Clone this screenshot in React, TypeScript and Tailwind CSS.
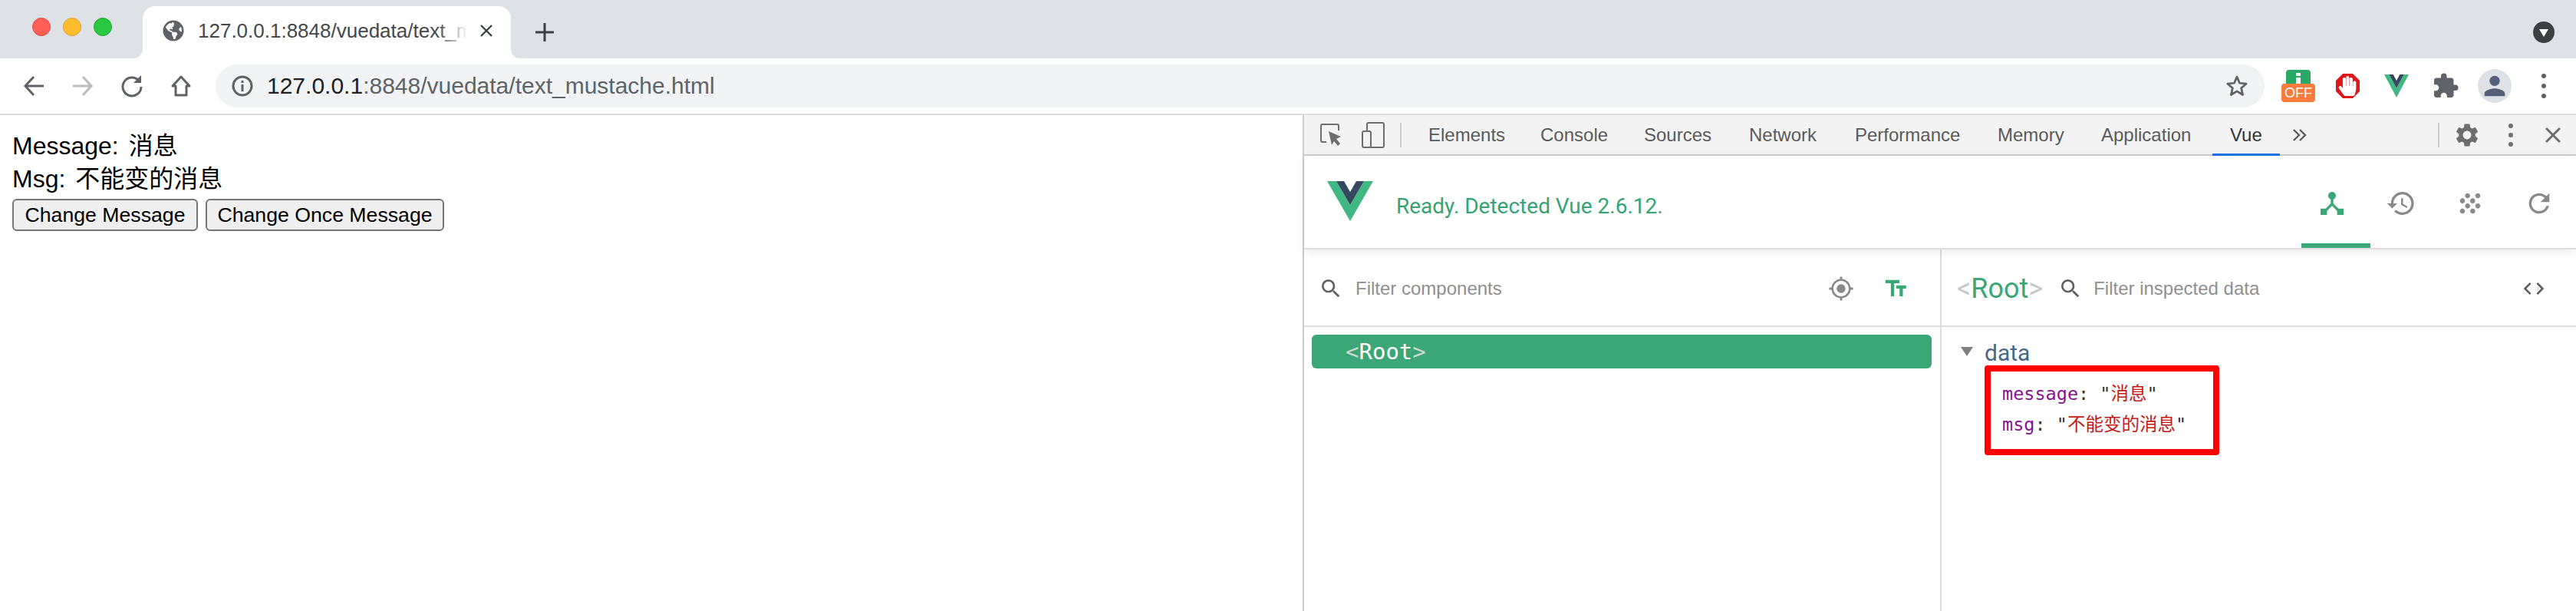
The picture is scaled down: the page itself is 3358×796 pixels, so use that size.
// Browser window with Vue devtools docked on the right.
import { FaGlobeAmericas, FaHandPaper } from "react-icons/fa";
import {
  MdCode,
  MdDeviceHub,
  MdExtension,
  MdFormatSize,
  MdGpsFixed,
  MdGrain,
  MdPerson,
  MdRefresh,
  MdRestore,
  MdSearch,
  MdSettings,
} from "react-icons/md";

const SANS = "font-['Liberation_Sans','Noto_Sans_CJK_SC',sans-serif]";
const MONO = "font-['DejaVu_Sans_Mono','Noto_Sans_CJK_SC',monospace]";
const ROBOTO = "font-['Roboto',sans-serif]";

// Widths keep each label at its place in the reference, Helvetica ran a bit wider here and there.
const devtoolsTabs = [
  { label: "Elements", width: "w-[146px]" },
  { label: "Console", width: "w-[135px]" },
  { label: "Sources", width: "w-[137px]" },
  { label: "Network", width: "w-[138px]" },
  { label: "Performance", width: "w-[186px]" },
  { label: "Memory", width: "w-[135px]" },
  { label: "Application", width: "w-[145px]" },
];

function VueLogo({ width, height }: { width: number; height: number }) {
  return (
    <svg width={width} height={height} viewBox="0 0 60 52" preserveAspectRatio="none">
      <polygon points="0,0 12,0 30,31 48,0 60,0 30,52" fill="#41b883" />
      <polygon points="12,0 22,0 30,14 38,0 48,0 30,31" fill="#35495e" />
    </svg>
  );
}

function Dots({ size = 6, gap = 7, color = "#5f6368" }: { size?: number; gap?: number; color?: string }) {
  const h = size * 3 + gap * 2;
  return (
    <svg width={size} height={h} viewBox={`0 0 ${size} ${h}`} fill={color}>
      <circle cx={size / 2} cy={size / 2} r={size / 2} />
      <circle cx={size / 2} cy={h / 2} r={size / 2} />
      <circle cx={size / 2} cy={h - size / 2} r={size / 2} />
    </svg>
  );
}

function NavButton({ children }: { children: React.ReactNode }) {
  return <div className="w-16 h-full flex items-center justify-center shrink-0">{children}</div>;
}

function TabStrip() {
  return (
    <div className="h-[76px] bg-[#dee1e6] flex items-start">
      <div className="w-[186px] shrink-0 flex gap-4 pl-[42px] pt-[23px]">
        <div className="w-6 h-6 rounded-full bg-[#ff5f57] border border-[#e2463f]" />
        <div className="w-6 h-6 rounded-full bg-[#febc2e] border border-[#dea123]" />
        <div className="w-6 h-6 rounded-full bg-[#28c840] border border-[#1aab29]" />
      </div>
      <div className="relative mt-2 w-[480px] h-[68px] bg-white rounded-t-2xl flex items-center pb-1 shrink-0">
        <div className="absolute -left-3 bottom-0 w-3 h-3 bg-white">
          <div className="w-full h-full bg-[#dee1e6] rounded-br-xl" />
        </div>
        <div className="absolute -right-3 bottom-0 w-3 h-3 bg-white">
          <div className="w-full h-full bg-[#dee1e6] rounded-bl-xl" />
        </div>
        <FaGlobeAmericas className="ml-[26px] shrink-0 text-[#5f6368]" size={28} />
        <div className={`${SANS} relative ml-[18px] w-[352px] overflow-hidden whitespace-nowrap text-[26px] leading-8 text-[#45474a]`}>
          127.0.0.1:8848/vuedata/text_mustache.html
          <div className="absolute right-0 top-0 h-full w-10 bg-gradient-to-r from-transparent to-white" />
        </div>
        <svg className="ml-[15px] shrink-0" width="18" height="18" viewBox="0 0 18 18" stroke="#3c4043" strokeWidth="2.4">
          <path d="M2 2 L16 16 M16 2 L2 16" />
        </svg>
      </div>
      <svg className="ml-[32px] mt-[30px] shrink-0" width="24" height="24" viewBox="0 0 24 24" stroke="#3c4043" strokeWidth="3">
        <path d="M12 0 V24 M0 12 H24" />
      </svg>
      <div className="ml-auto mr-[28px] mt-[28px] w-7 h-7 rounded-full bg-[#3c4043] flex items-center justify-center">
        <div className="w-0 h-0 mt-[2px] border-x-[6px] border-x-transparent border-t-[10px] border-t-white" />
      </div>
    </div>
  );
}

function Toolbar() {
  return (
    <div className="h-[74px] bg-white border-b-2 border-[#dadce0] flex items-center pl-3 pr-[10px]">
      <NavButton>
        <svg width="28" height="28" viewBox="0 0 28 28" fill="none" stroke="#5f6368" strokeWidth="3">
          <path d="M27 14 H3 M14 2 L3 14 L14 26" />
        </svg>
      </NavButton>
      <NavButton>
        <svg width="28" height="28" viewBox="0 0 28 28" fill="none" stroke="#babcbe" strokeWidth="3">
          <path d="M1 14 H25 M14 2 L25 14 L14 26" />
        </svg>
      </NavButton>
      <NavButton>
        <svg width="30" height="30" viewBox="0 0 30 30" fill="none">
          <path d="M24 8 A12 12 0 1 0 27 16" stroke="#5f6368" strokeWidth="3" />
          <path d="M27 1 V11 H17 Z" fill="#5f6368" />
        </svg>
      </NavButton>
      <NavButton>
        <svg width="28" height="30" viewBox="0 0 28 30" fill="none" stroke="#5f6368" strokeWidth="3">
          <path d="M14 3 L25 15 H21 V27 H7 V15 H3 Z" strokeLinejoin="round" />
        </svg>
      </NavButton>
      <div className="ml-[13px] mr-3 h-14 flex-1 rounded-full bg-[#f1f3f4] flex items-center">
        <svg className="ml-[21px] shrink-0" width="28" height="28" viewBox="0 0 28 28" fill="none" stroke="#5f6368" strokeWidth="3">
          <circle cx="14" cy="14" r="12" />
          <path d="M14 12 V21 M14 7 V10" />
        </svg>
        <div className={`${SANS} ml-[18px] text-[30px] leading-9 text-[#5f6368] whitespace-nowrap`}>
          <span className="text-[#202124]">127.0.0.1</span>:8848/vuedata/text_mustache.html
        </div>
        <svg className="ml-auto mr-[21px] shrink-0" width="30" height="30" viewBox="0 0 24 24" fill="none" stroke="#5f6368" strokeWidth="2.2">
          <path d="M12 2.5 L14.8 9 L21.8 9.6 L16.5 14.2 L18.1 21.2 L12 17.5 L5.9 21.2 L7.5 14.2 L2.2 9.6 L9.2 9 Z" strokeLinejoin="round" />
        </svg>
      </div>
      <NavButton>
        <div className="flex flex-col items-center">
          <div className="w-8 h-[19px] bg-[#2aa866] rounded-t-sm flex flex-col items-center justify-end gap-[2px]">
            <div className="w-[6px] h-[4px] bg-white" />
            <div className="w-[6px] h-[9px] bg-white" />
          </div>
          <div className={`${SANS} -mt-[1px] w-11 h-6 bg-[#fb7c3c] rounded text-white text-[18px] leading-6 text-center`}>OFF</div>
        </div>
      </NavButton>
      <NavButton>
        <div className="relative w-[31px] h-[32px] flex items-center justify-center">
          <svg className="absolute inset-0" width="31" height="32" viewBox="0 0 31 32">
            <polygon points="9,0 22,0 31,9 31,23 22,32 9,32 0,23 0,9" fill="#e0161c" />
          </svg>
          <FaHandPaper className="relative text-white" size={26} />
        </div>
      </NavButton>
      <NavButton>
        <VueLogo width={32} height={30} />
      </NavButton>
      <NavButton>
        <MdExtension className="text-[#5f6368]" size={36} />
      </NavButton>
      <NavButton>
        <div className="w-11 h-11 rounded-full bg-[#dee1e6] overflow-hidden flex items-center justify-center">
          <MdPerson className="text-[#54607a]" size={40} />
        </div>
      </NavButton>
      <NavButton>
        <Dots size={6} gap={7} color="#5f6368" />
      </NavButton>
    </div>
  );
}

function PageContent() {
  return (
    <div className={`${SANS} flex-1 pl-4 pt-[19px] text-black`}>
      <div className="text-[32px] leading-[43px] [word-spacing:4px]">Message: 消息</div>
      <div className="text-[32px] leading-[43px] [word-spacing:4px]">Msg: 不能变的消息</div>
      <div className="flex gap-[10px] mt-[4px]">
        <button className="h-[42px] w-[242px] bg-[#efefef] border-2 border-[#767676] rounded-[6px] text-[26.67px] leading-none">
          Change Message
        </button>
        <button className="h-[42px] w-[311px] bg-[#efefef] border-2 border-[#767676] rounded-[6px] text-[26.67px] leading-none">
          Change Once Message
        </button>
      </div>
    </div>
  );
}

function DevtoolsTabBar() {
  return (
    <div className={`${SANS} h-[53px] bg-[#f3f3f3] border-b-2 border-[#cccccc] flex items-center text-[24px] text-[#5a5a5a]`}>
      <div className="w-[59px] ml-[5px] flex justify-center">
        <svg width="28" height="30" viewBox="0 0 28 30" fill="none">
          <path d="M8 24 H3 A2 2 0 0 1 1 22 V3 A2 2 0 0 1 3 1 H22 A2 2 0 0 1 24 3 V9" stroke="#6e6e6e" strokeWidth="2" />
          <path d="M11 10 L27 17 L21 20 L26 26 L23 29 L18 23 L15 28 Z" fill="#6e6e6e" />
        </svg>
      </div>
      <div className="w-[52px] flex justify-center">
        <svg width="30" height="34" viewBox="0 0 30 34" fill="none" stroke="#6e6e6e" strokeWidth="2">
          <path d="M7 11 V3 A2 2 0 0 1 9 1 H27 A2 2 0 0 1 29 3 V31 A2 2 0 0 1 27 33 H11" />
          <rect x="1" y="12" width="11" height="21" rx="2" />
        </svg>
      </div>
      <div className="ml-[9px] w-[2px] h-8 bg-[#cccccc]" />
      <div className="flex h-full ml-[11px] pl-6">
        {devtoolsTabs.map((tab) => (
          <div key={tab.label} className={`${tab.width} h-full flex items-center whitespace-nowrap`}>
            {tab.label}
          </div>
        ))}
        <div className="relative w-[23px] ml-[23px] h-full flex items-center text-[#333333]">
          <span className="whitespace-nowrap">Vue</span>
          <div className="absolute -left-[23px] w-[88px] -bottom-[2px] h-[3px] bg-[#1a73e8]" />
        </div>
      </div>
      <div className="ml-[41px] w-[54px] flex justify-center">
        <svg width="18" height="16" viewBox="0 0 18 16" fill="none" stroke="#5a5a5a" strokeWidth="2.4">
          <path d="M1 1 L8 8 L1 15 M9 1 L16 8 L9 15" />
        </svg>
      </div>
      <div className="ml-auto w-[2px] h-8 bg-[#cccccc]" />
      <div className="w-[64px] ml-1 flex justify-center">
        <MdSettings className="text-[#6e6e6e]" size={36} />
      </div>
      <div className="w-[50px] flex justify-center">
        <Dots size={6} gap={6} color="#6e6e6e" />
      </div>
      <div className="w-[60px] flex justify-center">
        <svg width="20" height="20" viewBox="0 0 20 20" stroke="#6e6e6e" strokeWidth="3">
          <path d="M1 1 L19 19 M19 1 L1 19" />
        </svg>
      </div>
    </div>
  );
}

function VueHeader() {
  return (
    <div className="relative z-10 h-[122px] bg-white border-b-2 border-[#dddddd] shadow-[0_4px_12px_rgba(0,0,0,0.08)] flex items-center pl-[30px]">
      <div className="-mt-[2px]">
        <VueLogo width={60} height={52} />
      </div>
      <div className={`${ROBOTO} ml-[30px] mt-3 text-[28px] text-[#36a374] whitespace-nowrap`}>
        Ready. Detected Vue 2.6.12.
      </div>
      <div className="ml-auto flex h-full">
        <div className="relative w-[90px] pr-[10px] pt-1 flex items-center justify-center">
          <MdDeviceHub className="text-[#3ba776]" size={40} />
          <div className="absolute left-0 right-0 bottom-0 h-[6px] bg-[#3ba776]" />
        </div>
        <div className="w-[90px] pr-[10px] pt-1 flex items-center justify-center">
          <MdRestore className="text-[#8a8a8a]" size={40} />
        </div>
        <div className="w-[90px] pr-[10px] pt-1 flex items-center justify-center">
          <MdGrain className="text-[#8a8a8a]" size={40} />
        </div>
        <div className="w-[88px] pr-[8px] pt-1 flex items-center justify-center">
          <MdRefresh className="text-[#8a8a8a]" size={40} />
        </div>
      </div>
    </div>
  );
}

function ComponentsPane() {
  return (
    <div className="w-[831px] shrink-0 border-r-2 border-[#dddddd]">
      <div className="h-[101px] border-b-2 border-[#dddddd] flex items-center pl-[19px] pr-[27px] pt-[3px]">
        <MdSearch className="text-[#5f5f5f] shrink-0" size={32} />
        <div className={`${SANS} ml-4 text-[24px] text-[#8f8f8f]`}>Filter components</div>
        <div className="ml-auto w-[60px] flex justify-center">
          <MdGpsFixed className="text-[#8a8a8a]" size={34} />
        </div>
        <div className="ml-3 w-[60px] flex justify-center">
          <MdFormatSize className="text-[#3ba776] -scale-x-100" size={34} />
        </div>
      </div>
      <div className="pt-[10px] pl-[10px] pr-[11px]">
        <div className={`${MONO} h-11 rounded-[6px] bg-[#3ba776] flex items-center pl-11 pt-[2px] text-[29px] text-white`}>
          <span className="text-[#cfd8d3]">&lt;</span>Root<span className="text-[#cfd8d3]">&gt;</span>
        </div>
      </div>
    </div>
  );
}

function InspectorPane() {
  return (
    <div className="flex-1 min-w-0">
      <div className="h-[101px] border-b-2 border-[#dddddd] flex items-center pl-5 pr-[39px] pt-[3px]">
        <div className={`${ROBOTO} text-[36px] text-[#3ba776] whitespace-nowrap`}>
          <span className="text-[#c8c8c8]">&lt;</span>Root<span className="text-[#c8c8c8]">&gt;</span>
        </div>
        <MdSearch className="ml-[20px] text-[#5f5f5f] shrink-0" size={32} />
        <div className={`${SANS} ml-[14px] text-[24px] text-[#8f8f8f]`}>Filter inspected data</div>
        <MdCode className="ml-auto text-[#5f5f5f]" size={32} />
      </div>
      <div className="pt-[10px] pl-[25px]">
        <div className="h-11 flex items-center">
          <div className="w-0 h-0 border-x-[8px] border-x-transparent border-t-[12px] border-t-[#808080]" />
          <div className={`${ROBOTO} ml-[15px] pt-[3px] text-[30px] text-[#486887]`}>data</div>
        </div>
        <div className="ml-[31px] -mt-[4px] w-[306px] h-[117px] border-[8px] border-[#ff0000] rounded-[4px] pt-[9px] pl-[15px]">
          <div className={`${MONO} text-[23.5px] leading-10 whitespace-nowrap text-[#333333]`}>
            <span className="text-[#881391]">message</span>: "<span className="text-[#c41a16]">消息</span>"
          </div>
          <div className={`${MONO} text-[23.5px] leading-10 whitespace-nowrap text-[#333333]`}>
            <span className="text-[#881391]">msg</span>: "<span className="text-[#c41a16]">不能变的消息</span>"
          </div>
        </div>
      </div>
    </div>
  );
}

export default function App() {
  return (
    <div className="w-[3358px] h-[796px] bg-white overflow-hidden flex flex-col">
      <TabStrip />
      <Toolbar />
      <div className="flex-1 flex min-h-0">
        <PageContent />
        <div className="w-[1660px] shrink-0 border-l-2 border-[#cccccc] flex flex-col">
          <DevtoolsTabBar />
          <VueHeader />
          <div className="flex-1 flex min-h-0">
            <ComponentsPane />
            <InspectorPane />
          </div>
        </div>
      </div>
    </div>
  );
}
